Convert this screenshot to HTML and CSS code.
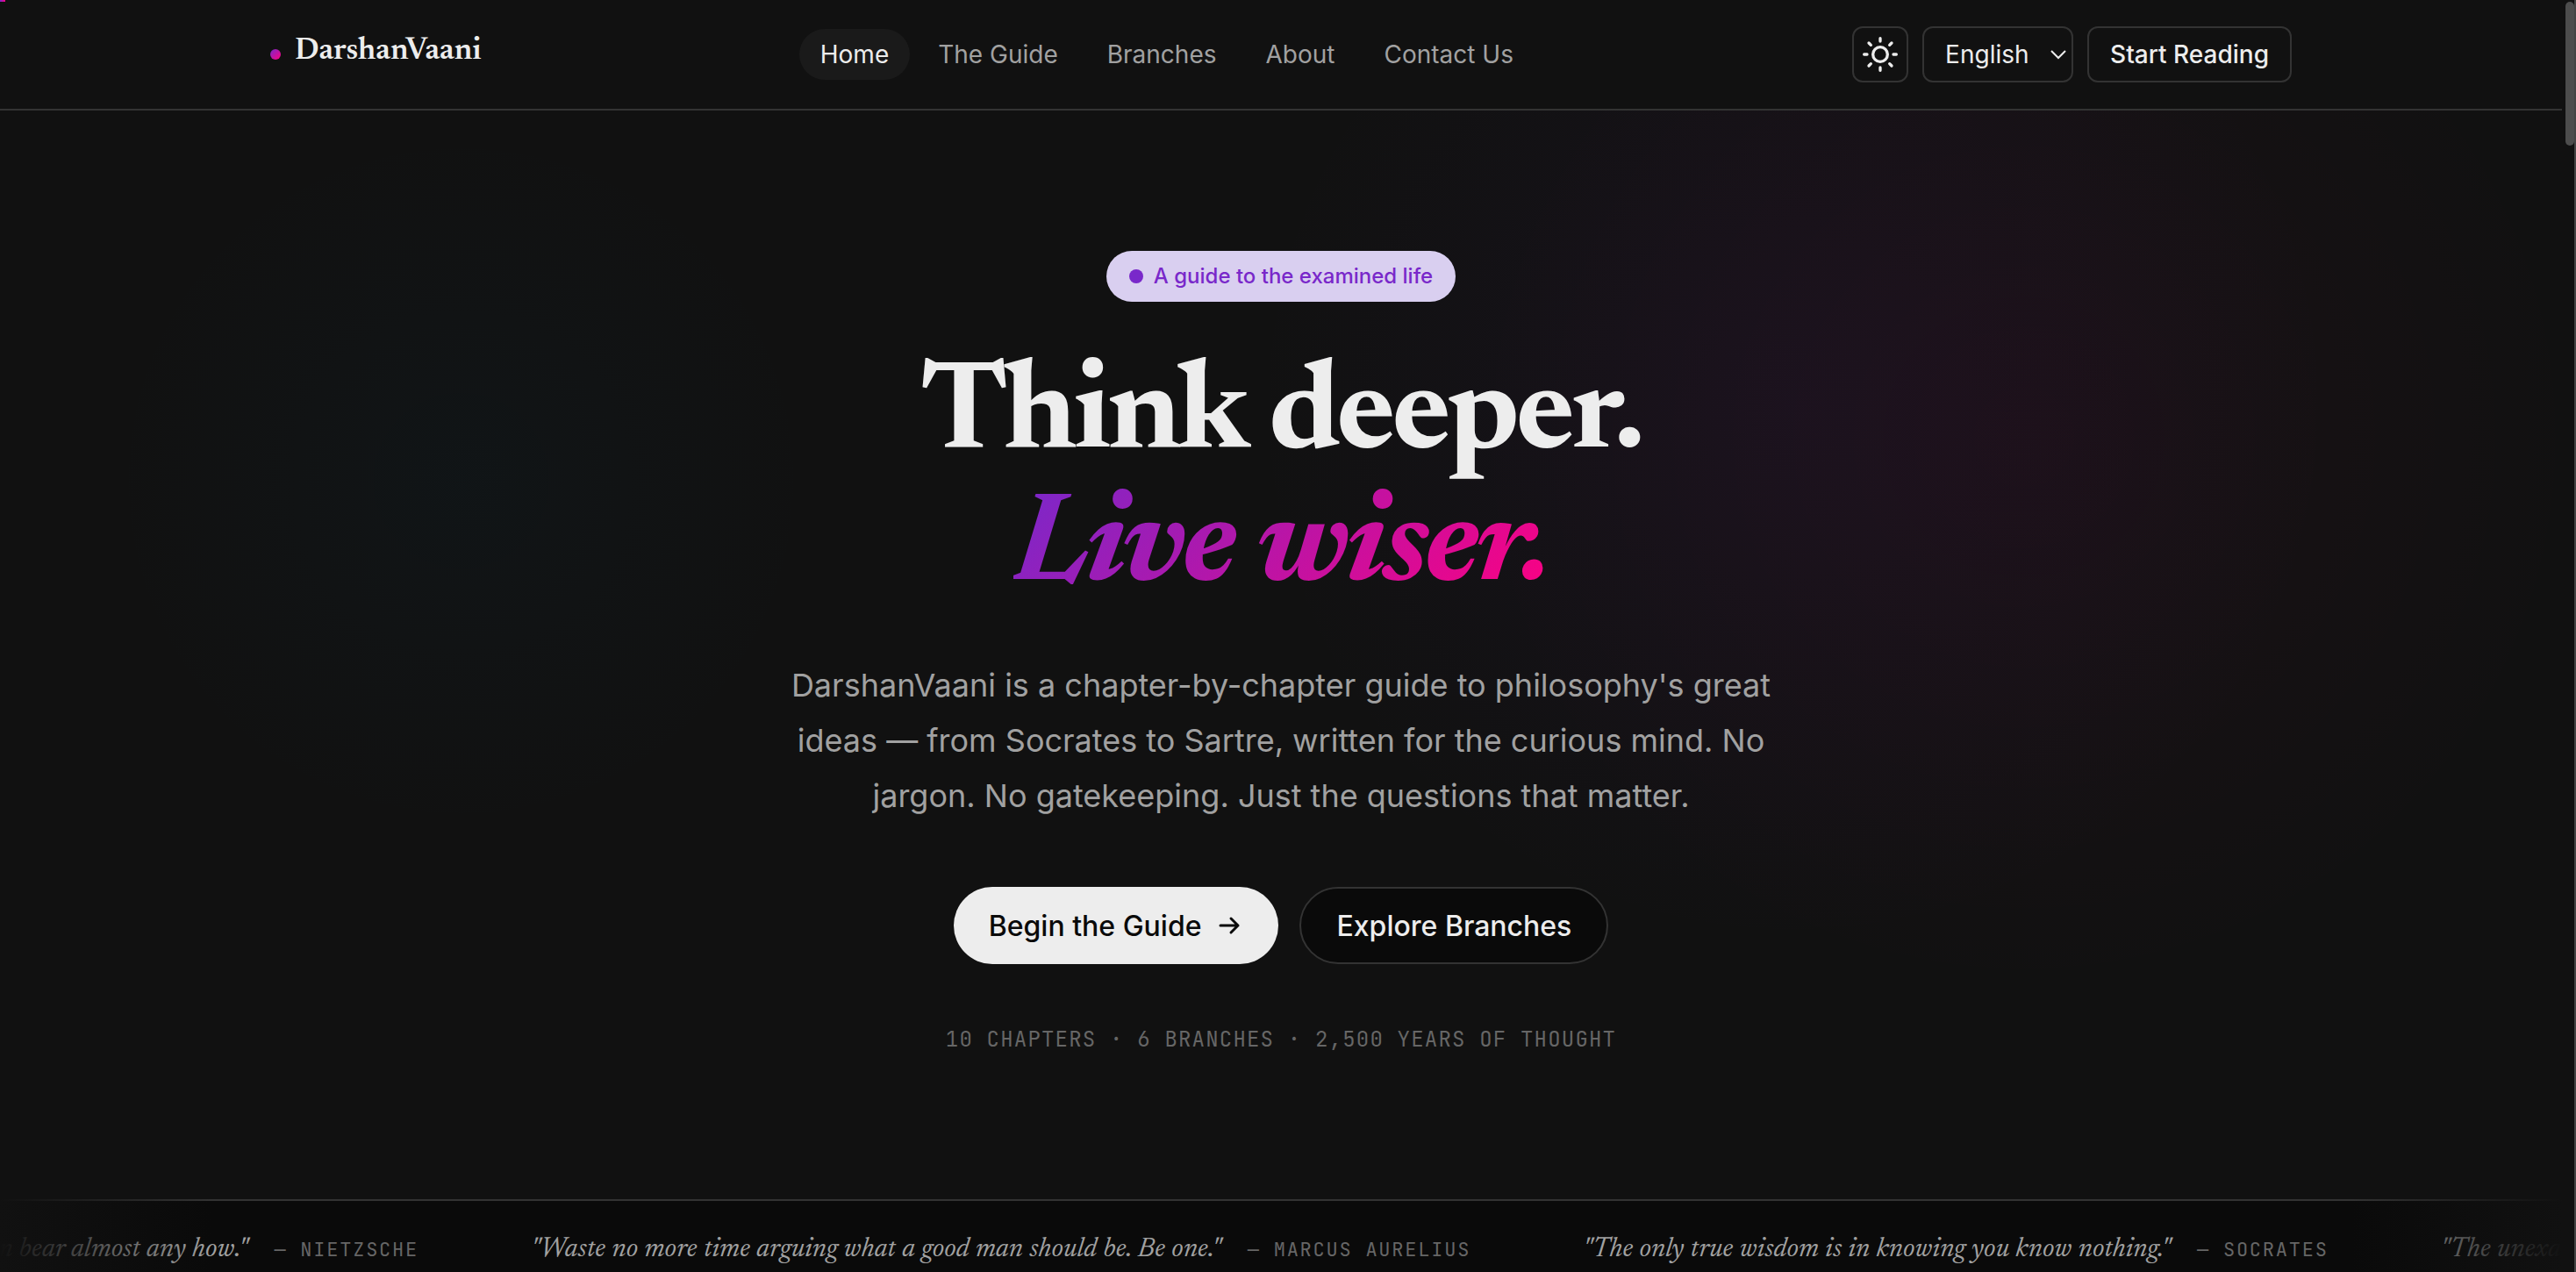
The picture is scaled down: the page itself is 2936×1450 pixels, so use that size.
FILE: index.html
```html
<!DOCTYPE html>
<html lang="en">
<head>
  <meta charset="UTF-8" />
  <meta name="viewport" content="width=device-width, initial-scale=1.0" />
  <title>DarshanVaani - A guide to the examined life</title>
  <link rel="stylesheet" href="styles.css">
</head>
<body>
  <!-- Reading progress -->
  <div class="progress"></div>

  <!-- Header -->
  <header class="header">
    <div class="container header-inner">
      <a href="#" class="logo"><span class="logo-dot"></span><span class="logo-text">DarshanVaani</span></a>

      <nav class="nav">
        <a href="#" class="active">Home</a>
        <a href="#guide">The Guide</a>
        <a href="#branches">Branches</a>
        <a href="#about">About</a>
        <a href="#contact">Contact Us</a>
      </nav>

      <div class="header-actions">
        <button type="button" class="theme-toggle" aria-label="Toggle theme">
          <svg viewBox="0 0 24 24" fill="none" stroke="currentColor" stroke-width="2" stroke-linecap="round">
            <circle cx="12" cy="12" r="5" />
            <path d="M12 1v2M12 21v2M4.2 4.2l1.4 1.4M18.4 18.4l1.4 1.4M1 12h2M21 12h2M4.2 19.8l1.4-1.4M18.4 5.6l1.4-1.4" />
          </svg>
        </button>
        <div class="lang">
          <select aria-label="Language">
            <option>English</option>
            <option>हिन्दी</option>
          </select>
          <svg class="lang-arrow" viewBox="0 0 20 12" fill="none" stroke="currentColor" stroke-width="2">
            <path d="M2 2l8 8 8-8" />
          </svg>
        </div>
        <a href="#guide" class="start">Start Reading</a>
      </div>
    </div>
  </header>

  <main>
    <!-- Hero -->
    <section class="hero">
      <p class="badge"><span class="badge-dot"></span>A guide to the examined life</p>
      <h1>Think deeper.<br><em>Live wiser.</em></h1>
      <p class="lead">DarshanVaani is a chapter-by-chapter guide to philosophy's great ideas — from Socrates to Sartre, written for the curious mind. No jargon. No gatekeeping. Just the questions that matter.</p>
      <div class="cta">
        <a href="#guide" class="btn btn-primary">Begin the Guide
          <svg viewBox="0 0 16 16" fill="none" stroke="currentColor" stroke-width="1.5" stroke-linecap="round" stroke-linejoin="round">
            <path d="M3 8h10M9 4l4 4-4 4" />
          </svg>
        </a>
        <a href="#branches" class="btn btn-secondary">Explore Branches</a>
      </div>
      <p class="stats">10 CHAPTERS · 6 BRANCHES · 2,500 YEARS OF THOUGHT</p>
    </section>

    <!-- Quotes -->
    <section class="marquee">
      <div class="track">
        <div class="quote"><q>He who has a why to live can bear almost any how.</q><cite>— NIETZSCHE</cite></div>
        <div class="quote"><q>Waste no more time arguing what a good man should be. Be one.</q><cite>— MARCUS AURELIUS</cite></div>
        <div class="quote"><q>The only true wisdom is in knowing you know nothing.</q><cite>— SOCRATES</cite></div>
        <div class="quote"><q>The unexamined life is not worth living.</q><cite>— SOCRATES</cite></div>
      </div>
    </section>
  </main>

  <div class="scrollbar"></div>
</body>
</html>
```
FILE: styles.css
```css
:root {
  --bg: #111;
  --bg-deep: #0a0a0a;
  --bg-soft: #1a1a1a;
  --border: #333;
  --text: #ededed;
  --muted: #a1a1a1;
  --faint: #666;
  --purple: #7928ca;
  --pink: #ff0080;
  --serif: "Newsreader", "Liberation Serif", serif;
  --mono: "JetBrains Mono", "DejaVu Sans Mono", monospace;
}

* {
  box-sizing: border-box;
  margin: 0;
  padding: 0;
}

html {
  scrollbar-width: none;
}

body {
  padding-right: 16px;
  background: var(--bg);
  color: var(--text);
  font-family: "Inter", sans-serif;
  font-size: 28px;
  overflow-x: hidden;
}

a {
  color: inherit;
  text-decoration: none;
}

.progress {
  position: fixed;
  top: 0;
  left: 0;
  width: 6px;
  height: 2px;
  background: linear-gradient(90deg, var(--purple), var(--pink));
  z-index: 20;
}

.container {
  max-width: 2400px;
  margin: 0 auto;
  padding: 0 48px;
}

/* Header */
.header {
  border-bottom: 2px solid var(--border);
}

.header-inner {
  display: flex;
  align-items: center;
  justify-content: space-between;
  height: 124px;
}

.logo {
  display: flex;
  align-items: center;
  gap: 16px;
  font-family: var(--serif);
  font-size: 36px;
  font-weight: 600;
  line-height: 40px;
}

.logo-text {
  padding-bottom: 6px;
}

.logo-dot {
  width: 12px;
  height: 12px;
  border-radius: 50%;
  background: linear-gradient(135deg, var(--purple), var(--pink));
}

.nav {
  display: flex;
  gap: 8px;
}

.nav a {
  padding: 12px 24px;
  border-radius: 29px;
  color: var(--muted);
  line-height: 34px;
}

.nav a.active {
  background: var(--bg-soft);
  color: var(--text);
}

.header-actions {
  display: flex;
  gap: 16px;
}

.theme-toggle,
.lang select,
.start {
  height: 64px;
  border: 2px solid var(--border);
  border-radius: 12px;
  background: transparent;
  color: var(--text);
  font: inherit;
}

.theme-toggle {
  display: grid;
  place-items: center;
  width: 64px;
  cursor: pointer;
}

.theme-toggle svg {
  width: 40px;
  height: 40px;
}

.lang {
  position: relative;
}

.lang select {
  width: 172px;
  padding: 0 24px;
  appearance: none;
}

.lang-arrow {
  position: absolute;
  top: 26px;
  right: 7px;
  width: 20px;
  height: 12px;
  pointer-events: none;
}

.start {
  padding: 0 24px;
  font-weight: 500;
  line-height: 60px;
}

/* Hero */
.hero {
  display: flex;
  flex-direction: column;
  align-items: center;
  padding: 160px 48px 162px;
  text-align: center;
  background:
    radial-gradient(circle 620px at 70% 27%, rgba(121, 40, 202, 0.06), transparent),
    radial-gradient(circle 640px at 79% 30%, rgba(255, 0, 128, 0.04), transparent),
    radial-gradient(circle 400px at 18% 34%, rgba(0, 112, 163, 0.04), transparent);
}

.badge {
  display: flex;
  align-items: center;
  gap: 12px;
  padding: 12px 26px;
  border-radius: 29px;
  background: #d9cff0;
  color: var(--purple);
  font-size: 24px;
  font-weight: 500;
  line-height: 34px;
}

.badge-dot {
  width: 16px;
  height: 16px;
  border-radius: 50%;
  background: currentColor;
}

h1 {
  margin-top: 56px;
  font-family: var(--serif);
  font-size: 144px;
  font-weight: 700;
  line-height: 151px;
  letter-spacing: -4px;
}

h1 em {
  background: linear-gradient(135deg, var(--purple), var(--pink));
  background-clip: text;
  color: transparent;
}

.lead {
  max-width: 1120px;
  margin-top: 48px;
  color: var(--muted);
  font-size: 36px;
  line-height: 63px;
}

.cta {
  display: flex;
  gap: 24px;
  margin-top: 72px;
}

.btn {
  display: flex;
  align-items: center;
  gap: 16px;
  height: 88px;
  padding: 0 40px;
  border-radius: 44px;
  font-size: 32px;
  font-weight: 500;
}

.btn svg {
  width: 32px;
  height: 32px;
}

.btn-primary {
  background: var(--text);
  color: var(--bg-deep);
}

.btn-secondary {
  border: 2px solid var(--border);
  background: var(--bg-deep);
}

.stats {
  margin-top: 66px;
  color: var(--faint);
  font-family: var(--mono);
  font-size: 24px;
  line-height: 40px;
  letter-spacing: 0.05em;
}

/* Quotes */
.marquee {
  position: relative;
  overflow: hidden;
  padding: 32px 0;
  background: var(--bg-deep);
  box-shadow: inset 0 2px var(--border);
}

/* fades both ends of the strip */
.marquee::after {
  content: "";
  position: absolute;
  inset: 0;
  background: linear-gradient(90deg, var(--bg), transparent 240px calc(100% - 240px), var(--bg));
}

.track {
  display: flex;
  gap: 128px;
  width: max-content;
  margin-left: -342px;
}

.quote {
  display: flex;
  align-items: baseline;
  gap: 30px;
  line-height: 50px;
  white-space: nowrap;
}

.quote q {
  color: var(--muted);
  font-family: var(--serif);
  font-size: 32px;
  font-style: italic;
  quotes: '"' '"';
}

.quote cite {
  color: var(--faint);
  font-family: var(--mono);
  font-size: 22px;
  font-style: normal;
  letter-spacing: 0.08em;
}

.scrollbar {
  position: fixed;
  top: 0;
  right: 0;
  bottom: 0;
  width: 12px;
  padding-top: 2px;
  border-right: 2px solid #444;
}

.scrollbar::before {
  content: "";
  display: block;
  height: 164px;
  border-radius: 6px;
  background: #4d4d4d;
}
```
